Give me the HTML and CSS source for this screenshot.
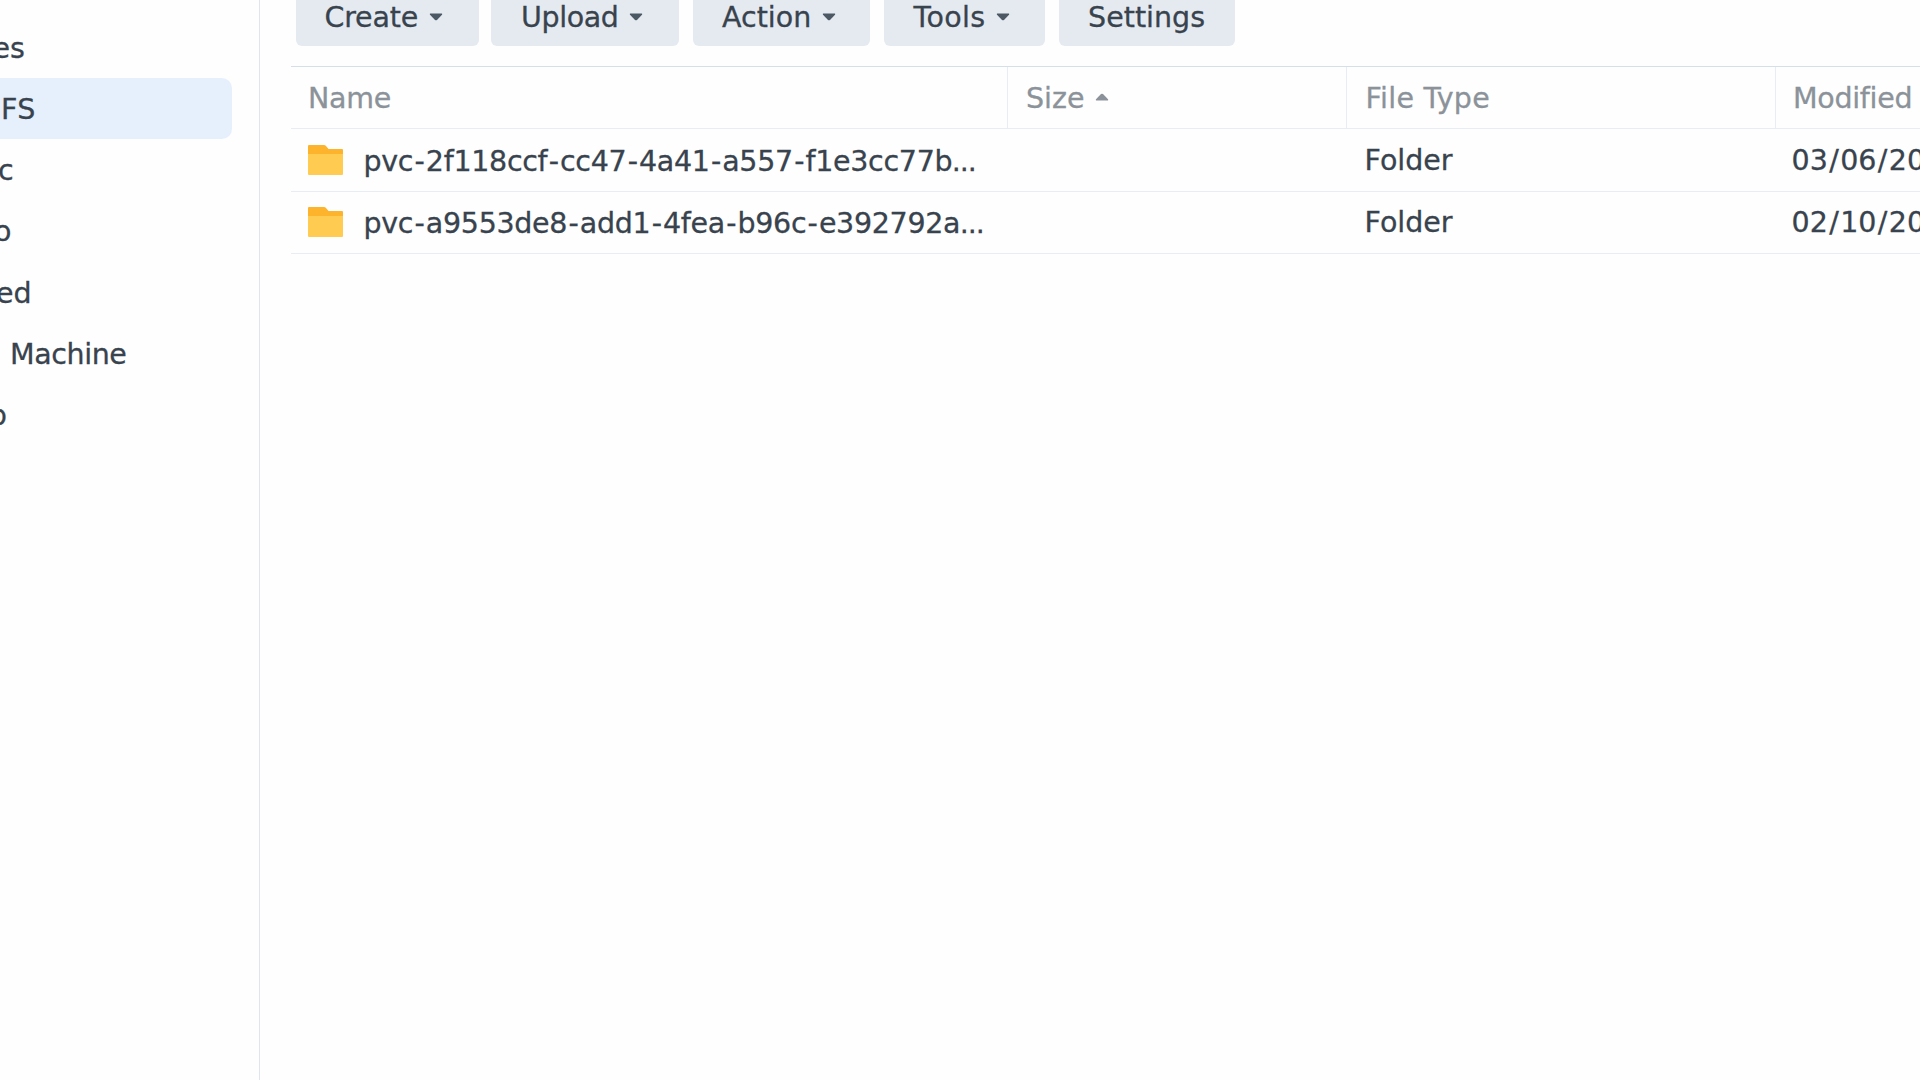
FILE: index.html
```
<!DOCTYPE html>
<html lang="en">
<head>
<meta charset="utf-8">
<title>File Station</title>
<link rel="stylesheet" href="styles.css">
</head>
<body>
<div class="app">
  <nav class="sidebar">
    <div class="node"><span class="label n1">es</span></div>
    <div class="node selected"><span class="label n2">FS</span></div>
    <div class="node"><span class="label n3">c</span></div>
    <div class="node"><span class="label n4">o</span></div>
    <div class="node"><span class="label n5">ed</span></div>
    <div class="node"><span class="label n6">Machine</span></div>
    <div class="node"><span class="label n7">o</span></div>
  </nav>
  <main class="content">
    <div class="toolbar">
      <button class="btn create"><span>Create</span><svg class="caret" viewBox="0 0 14 8"><path d="M1.2 0.5H12.8Q13.6 1 13 1.8L8 6.9Q7 7.7 6 6.9L1 1.8Q.4 1 1.2.5Z"/></svg></button>
      <button class="btn upload"><span>Upload</span><svg class="caret" viewBox="0 0 14 8"><path d="M1.2 0.5H12.8Q13.6 1 13 1.8L8 6.9Q7 7.7 6 6.9L1 1.8Q.4 1 1.2.5Z"/></svg></button>
      <button class="btn action"><span>Action</span><svg class="caret" viewBox="0 0 14 8"><path d="M1.2 0.5H12.8Q13.6 1 13 1.8L8 6.9Q7 7.7 6 6.9L1 1.8Q.4 1 1.2.5Z"/></svg></button>
      <button class="btn tools"><span>Tools</span><svg class="caret" viewBox="0 0 14 8"><path d="M1.2 0.5H12.8Q13.6 1 13 1.8L8 6.9Q7 7.7 6 6.9L1 1.8Q.4 1 1.2.5Z"/></svg></button>
      <button class="btn settings"><span>Settings</span></button>
    </div>
    <div class="grid">
      <div class="row head">
        <div class="cell name">Name</div>
        <div class="cell size"><span>Size</span><svg class="caret sort" viewBox="0 0 14 8"><path d="M1.2 7.5H12.8Q13.6 7 13 6.2L8 1.1Q7 .3 6 1.1L1 6.2Q.4 7 1.2 7.5Z"/></svg></div>
        <div class="cell type">File Type</div>
        <div class="cell date">Modified</div>
      </div>
      <div class="row">
        <div class="cell name"><svg class="folder" viewBox="0 0 35 30"><path fill="#fdb32b" d="M1 0H16Q17 0 17.8 .8L20.5 4H34Q35 4 35 5V12H0V1Q0 0 1 0Z"/><path fill="#ffcb50" d="M0 9H35V29Q35 30 34 30H1Q0 30 0 29Z"/></svg><span class="file">pvc<i>-</i>2f118ccf<i>-</i>cc47<i>-</i>4a41<i>-</i>a557<i>-</i>f1e3cc77b<b>…</b></span></div>
        <div class="cell size"></div>
        <div class="cell type">Folder</div>
        <div class="cell date">03<i>/</i>06<i>/</i>2024</div>
      </div>
      <div class="row">
        <div class="cell name"><svg class="folder" viewBox="0 0 35 30"><path fill="#fdb32b" d="M1 0H16Q17 0 17.8 .8L20.5 4H34Q35 4 35 5V12H0V1Q0 0 1 0Z"/><path fill="#ffcb50" d="M0 9H35V29Q35 30 34 30H1Q0 30 0 29Z"/></svg><span class="file">pvc<i>-</i>a9553de8<i>-</i>add1<i>-</i>4fea<i>-</i>b96c<i>-</i>e392792a<b>…</b></span></div>
        <div class="cell size"></div>
        <div class="cell type">Folder</div>
        <div class="cell date">02<i>/</i>10<i>/</i>2024</div>
      </div>
    </div>
  </main>
</div>
</body>
</html>
```
FILE: styles.css
```
* { box-sizing: border-box; }
body {
  margin: 0;
  background: #fefefe;
  color: #38434e;
  font: 28.5px/34px "DejaVu Sans", Verdana, sans-serif;
  -webkit-text-stroke: 0.3px currentColor;
  overflow: hidden;
}
i, b { font-style: normal; font-weight: normal; }
.app { display: flex; width: 1920px; height: 1080px; overflow: hidden; }
.sidebar {
  flex: none;
  width: 259.5px;
  padding-top: 17px;
  border-right: 1px solid #dfe5ee;
  overflow: hidden;
}
.node {
  display: flex;
  align-items: center;
  width: 232px;
  height: 61.2px;
  padding-top: 2.4px;
  white-space: nowrap;
}
.selected { background: #e6f0fd; border-radius: 0 10px 10px 0; }
.n1 { margin-left: -7.5px; }
.n2 { margin-left: 1px; letter-spacing: 0.4px; }
.n3 { margin-left: -2px; }
.n4 { margin-left: -6px; }
.n5 { margin-left: -4px; }
.n6 { margin-left: 10px; letter-spacing: -0.4px; }
.n7 { margin-left: -10.4px; }

.content { flex: none; width: 1660.5px; padding-left: 31.5px; overflow: hidden; }
.toolbar {
  display: flex;
  gap: 13.5px;
  height: 66px;
  padding-left: 4.5px;
}
.btn {
  display: flex;
  align-items: flex-start;
  height: 45.5px;
  padding: 1px 0 0 29px;
  border: 0;
  border-radius: 0 0 6px 6px;
  background: #e5eaf1;
  color: inherit;
  font: inherit;
}
.create { width: 183px; letter-spacing: -0.2px; }
.upload { width: 188px; margin-left: -1px; padding-left: 30px; letter-spacing: -0.4px; }
.action { width: 177px; margin-left: 0.5px; }
.tools { width: 161px; margin-left: 0.6px; padding-left: 29.5px; letter-spacing: 0.3px; }
.settings { width: 176px; padding-left: 29.5px; }
.btn .caret { margin: 12px 0 0 10.5px; }
.caret { flex: none; width: 14px; height: 8px; fill: #4c5965; }
.caret.sort { margin: -3px 0 0 10.5px; fill: #8b9299; }

.grid { border-top: 1px solid #d5dfe9; }
.row {
  display: grid;
  grid-template-columns: 716px 339px 429px 144.5px;
  height: 62.5px;
  border-bottom: 1px solid #e6edf4;
}
.cell {
  display: flex;
  align-items: center;
  padding: 2px 0 0 17.5px;
  overflow: hidden;
  white-space: nowrap;
}
.row .type { padding-left: 18.5px; }
.row .date { padding-left: 16.5px; }
.head { height: 62px; color: #8b9299; }
.head .name { padding-left: 17px; letter-spacing: -0.3px; }
.head .size { padding-left: 18px; }
.head .type { letter-spacing: 0.25px; }
.head .date { padding-left: 17px; letter-spacing: -0.3px; }
.head .cell + .cell { border-left: 1px solid #e6edf4; }
.folder { flex: none; width: 35px; height: 30px; margin: -2.5px 20px 0 -1px; }
.file { padding: 1.5px 0 0 1px; letter-spacing: -0.3px; }
.file i { padding: 0 1.3px; }
.file b { font-size: 24px; line-height: 1; -webkit-text-stroke-width: 0.7px; }
.date i { padding: 0 1.4px; }
```
